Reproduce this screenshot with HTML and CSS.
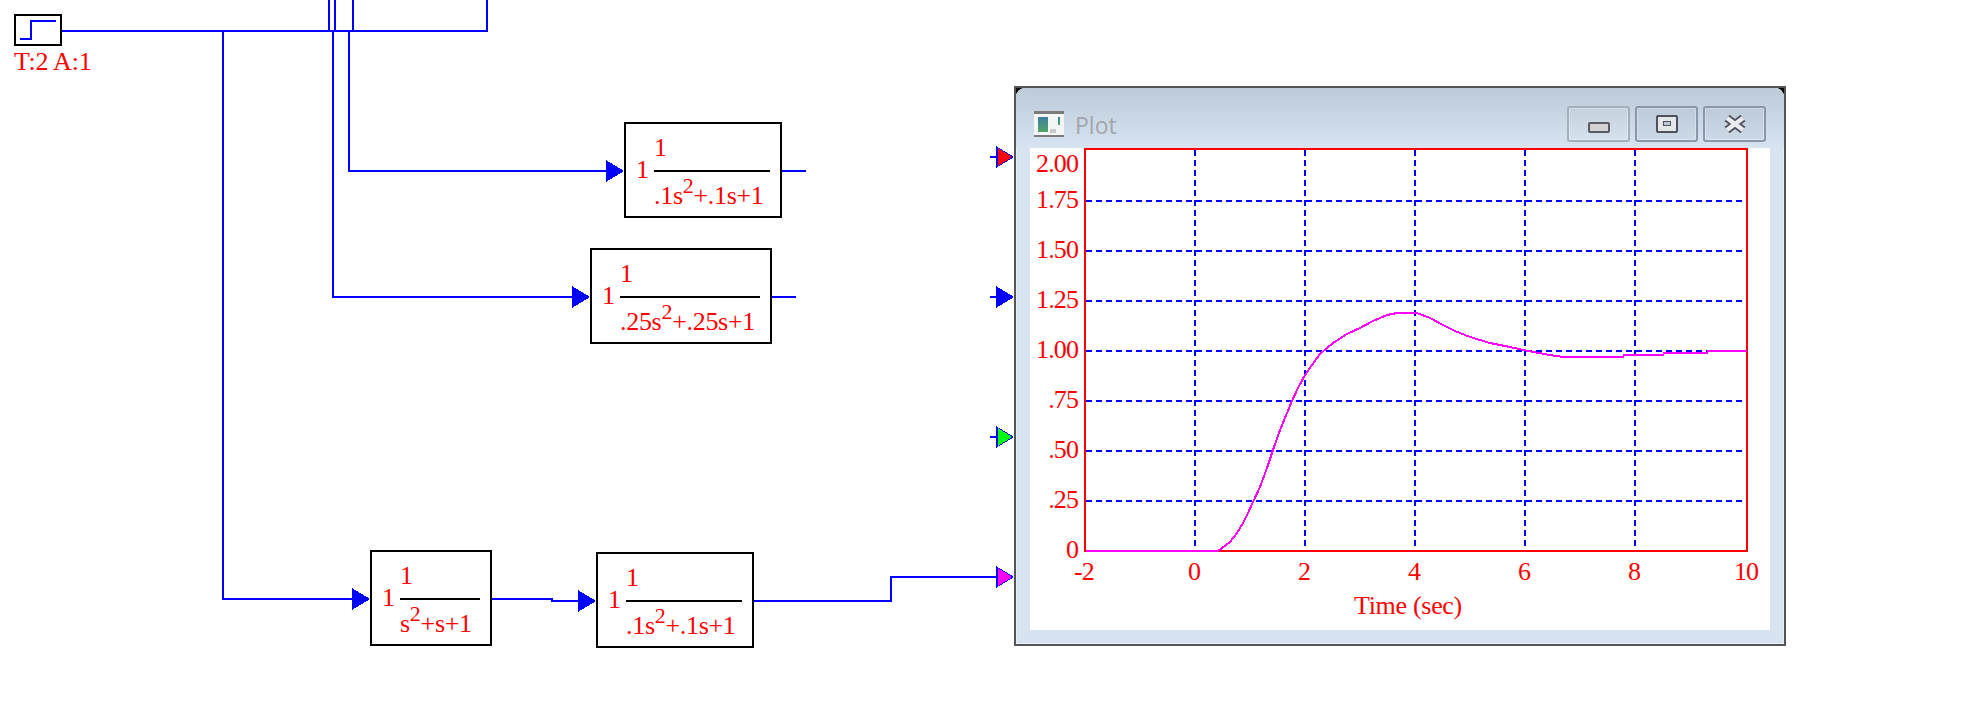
FILE: index.html
```html
<!DOCTYPE html>
<html>
<head>
<meta charset="utf-8" />
<title>Plot</title>
<link rel="stylesheet" href="styles.css">
</head>

<body>
<div class="canvas">

  <!-- wires and input arrows -->
  <svg class="wires" width="1976" height="726" viewBox="0 0 1976 726">
    <path d="M62 31H487V0M329 0V31M335 0V31M353 0V31" />
    <path d="M223 31V599H352M333 31V297H572M349 31V171H606" />
    <path d="M782 171H806M772 297H796M492 599H552V601H578M754 601H891V577H996" />
    <path d="M990 157H998M990 297H998M990 437H998" />
    <polygon class="arr" points="606,160 624,171 606,182" />
    <polygon class="arr" points="572,286 590,297 572,308" />
    <polygon class="arr" points="352,588 370,599 352,610" />
    <polygon class="arr" points="578,590 596,601 578,612" />
    <polygon class="arr" points="996,146 1014,157 996,168" />
    <polygon class="fill red" points="998,148 1012,157 998,166" />
    <polygon class="arr" points="996,286 1014,297 996,308" />
    <polygon class="arr" points="996,426 1014,437 996,448" />
    <polygon class="fill green" points="998,428 1012,437 998,446" />
    <polygon class="arr" points="996,566 1014,577 996,588" />
    <polygon class="fill pink" points="998,568 1012,577 998,586" />
  </svg>

  <div class="step">
    <svg width="44" height="28" viewBox="16 16 44 28"><path d="M20 39H31V21H56" /></svg>
  </div>
  <div class="step-label">T:2 A:1</div>

  <div class="block b1">
    <div class="gain">1</div>
    <div class="frac">
      <div class="num">1</div>
      <div class="den">.1s<sup>2</sup>+.1s+1</div>
    </div>
  </div>

  <div class="block b2">
    <div class="gain">1</div>
    <div class="frac">
      <div class="num">1</div>
      <div class="den">.25s<sup>2</sup>+.25s+1</div>
    </div>
  </div>

  <div class="block b3">
    <div class="gain">1</div>
    <div class="frac">
      <div class="num">1</div>
      <div class="den">s<sup>2</sup>+s+1</div>
    </div>
  </div>

  <div class="block b4">
    <div class="gain">1</div>
    <div class="frac">
      <div class="num">1</div>
      <div class="den">.1s<sup>2</sup>+.1s+1</div>
    </div>
  </div>

  <!-- plot window -->
  <div class="window">
    <div class="frame">
      <div class="titlebar">
        <svg class="app-icon" width="30" height="26" viewBox="0 0 30 26">
          <defs>
            <linearGradient id="tealg" x1="0" y1="0" x2="0" y2="1">
              <stop offset="0" stop-color="#3f7f9f" />
              <stop offset="1" stop-color="#4fa468" />
            </linearGradient>
          </defs>
          <rect width="30" height="26" fill="#f4f6f6" />
          <rect width="30" height="3" fill="#7b7b7b" />
          <rect y="24" width="30" height="2" fill="#7b7b7b" />
          <rect x="4" y="6" width="10" height="15" fill="url(#tealg)" />
          <rect x="16" y="18" width="6" height="4" fill="#c8c8c8" />
          <rect x="24" y="6" width="2" height="8" fill="url(#tealg)" />
        </svg>
        <span class="win-title">Plot</span>
        <div class="win-btns">
          <div class="win-btn faded">
            <svg width="22" height="18" viewBox="0 0 22 18"><rect x="1" y="8" width="20" height="9" rx="1" fill="#d2d2d2" stroke="#5a5a62" stroke-width="2" /></svg>
          </div>
          <div class="win-btn">
            <svg width="22" height="18" viewBox="0 0 22 18"><rect x="1" y="1" width="20" height="16" rx="1" fill="#e4e7ea" stroke="#50505c" stroke-width="2" /><rect x="7.5" y="6.5" width="7" height="4" fill="#b9c7d8" stroke="#50505c" /></svg>
          </div>
          <div class="win-btn">
            <svg width="22" height="18" viewBox="0 0 22 18"><path d="M3 3L19 15M19 3L3 15" fill="none" stroke="#50505c" stroke-width="8" /><path d="M3 3L19 15M19 3L3 15" fill="none" stroke="#e9ebee" stroke-width="4.5" /></svg>
          </div>
        </div>
      </div>

      <div class="panel">
        <svg class="plot" width="740" height="482" viewBox="1030 148 740 482">
          <path class="grid" d="M1195 150V550M1305 150V550M1415 150V550M1525 150V550M1635 150V550" />
          <path class="grid" d="M1086 201H1746M1086 251H1746M1086 301H1746M1086 351H1746M1086 401H1746M1086 451H1746M1086 501H1746" />
          <rect class="axes" x="1085" y="149" width="662" height="402" />
          <polyline class="curve" points="1086,551 1218,551 1230,542 1237,533 1243,523 1248,513 1253,502 1260,487 1267,468 1273,450 1280,430 1287,413 1292,401 1298,388 1305,375 1312,365 1320,354 1333,343 1347,334 1360,328 1373,321 1387,315 1397,313 1417,313 1430,318 1443,325 1455,331 1470,337 1490,343 1510,347 1528,351 1550,355 1563,357 1623,357 1624,355 1663,355 1664,353 1707,353 1708,351 1747,351" />
          <g class="ylabels">
            <text x="1078" y="172">2.00</text>
            <text x="1078" y="208">1.75</text>
            <text x="1078" y="258">1.50</text>
            <text x="1078" y="308">1.25</text>
            <text x="1078" y="358">1.00</text>
            <text x="1078" y="408">.75</text>
            <text x="1078" y="458">.50</text>
            <text x="1078" y="508">.25</text>
            <text x="1078" y="558">0</text>
          </g>
          <g class="xlabels">
            <text x="1084" y="580">-2</text>
            <text x="1194" y="580">0</text>
            <text x="1304" y="580">2</text>
            <text x="1414" y="580">4</text>
            <text x="1524" y="580">6</text>
            <text x="1634" y="580">8</text>
            <text x="1746" y="580">10</text>
            <text class="xname" x="1408" y="614">Time (sec)</text>
          </g>
        </svg>
      </div>
    </div>
  </div>

</div>
</body>
</html>
```

FILE: styles.css
```css
*{margin:0;padding:0;box-sizing:border-box;}
body{background:#fff;overflow:hidden;font-family:"Liberation Serif",serif;font-size:26px;color:#f00;}
.canvas{position:relative;width:1976px;height:726px;overflow:hidden;}

.wires{position:absolute;left:0;top:0;}
.wires path{fill:none;stroke:#00f;stroke-width:2;shape-rendering:crispEdges;}
.arr{fill:#00f;shape-rendering:crispEdges;}
.fill{shape-rendering:crispEdges;}
.fill.red{fill:#f00;}
.fill.green{fill:#0f0;}
.fill.pink{fill:#f0f;}

.step{position:absolute;left:14px;top:14px;width:48px;height:32px;border:2px solid #000;background:#fff;}
.step svg{display:block;}
.step path{fill:none;stroke:#00f;stroke-width:2;shape-rendering:crispEdges;}
.step-label{position:absolute;left:14px;top:50px;line-height:24px;letter-spacing:-.2px;}

/* transfer function blocks */
.block{position:absolute;height:96px;border:2px solid #000;background:#fff;display:flex;align-items:center;line-height:24px;}
.b1{left:624px;top:122px;width:158px;}
.b2{left:590px;top:248px;width:182px;}
.b3{left:370px;top:550px;width:122px;}
.b4{left:596px;top:552px;width:158px;}
.gain{width:28px;padding-left:10px;}
.frac{flex:1;height:100%;margin-right:10px;display:flex;flex-direction:column;}
.num{height:46px;padding-top:12px;}
.den{height:46px;padding-top:12px;border-top:2px solid #000;white-space:nowrap;letter-spacing:-.3px;}
.den sup{font-size:22px;line-height:0;vertical-align:11px;}

/* window */
.window{position:absolute;left:1014px;top:86px;width:772px;height:560px;border:2px solid #555;background:#000;}
.frame{height:100%;background:#d7e3f0;border-radius:9px 9px 0 0;box-shadow:inset 0 0 0 1px #e6eef6;display:flex;flex-direction:column;}
.titlebar{height:60px;padding:18px 18px 6px;display:flex;align-items:center;background:linear-gradient(#bccbd9,#d7e3f0);border-radius:9px 9px 0 0;}
.app-icon{display:block;}
.win-title{margin-left:11px;padding-top:2px;font-family:"Open Sans",sans-serif;font-size:23px;color:#a2a6ae;}
.win-btns{margin-left:auto;display:flex;gap:5px;}
.win-btn{width:63px;height:36px;border:2px solid #8b96ad;border-radius:3px;background:linear-gradient(#bdcad9,#ccd9e7);box-shadow:inset 0 0 0 1px rgba(255,255,255,.3);display:flex;align-items:center;justify-content:center;}
.win-btn.faded{border-color:#a3afbb;background:linear-gradient(#c5d1de,#d5e1ed);}
.panel{flex:1;margin:0 14px 14px;background:#fff;}
.plot{display:block;}
.grid{fill:none;stroke:#00f;stroke-width:2;stroke-dasharray:6 4;shape-rendering:crispEdges;}
.axes{fill:none;stroke:#f00;stroke-width:2;shape-rendering:crispEdges;}
.curve{fill:none;stroke:#f0f;stroke-width:2;shape-rendering:crispEdges;}
.plot text{font-family:"Liberation Serif",serif;font-size:26px;fill:#f00;letter-spacing:-.9px;}
.ylabels text{text-anchor:end;}
.xlabels text{text-anchor:middle;}
.plot .xname{letter-spacing:-.3px;}
```
